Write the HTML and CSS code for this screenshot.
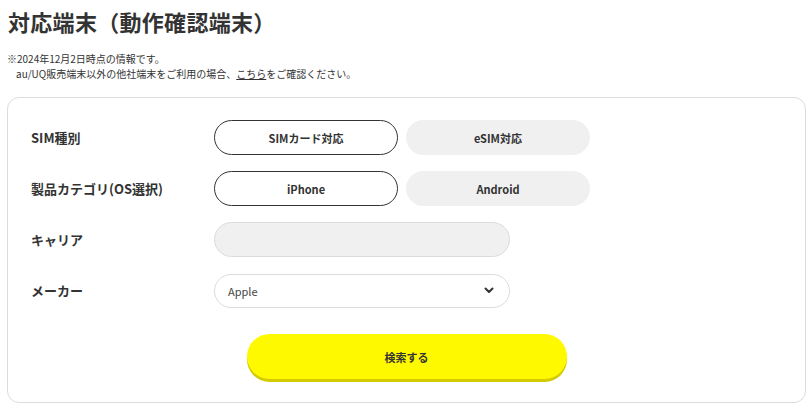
FILE: index.html
```html
<!DOCTYPE html>
<html lang="ja">
<head>
<meta charset="utf-8">
<link rel="stylesheet" href="styles.css">
</head>
<body>
<div class="page">
  <h1 class="title">対応端末（動作確認端末）</h1>
  <p class="note">※2024年12月2日時点の情報です。<br><span class="indent">au/UQ販売端末以外の他社端末をご利用の場合、<a class="link" href="#">こちら</a>をご確認ください。</span></p>
  <div class="card">
    <div class="row">
      <div class="label">SIM種別</div>
      <div class="options">
        <button class="pill pill-active">SIMカード対応</button>
        <button class="pill pill-off">eSIM対応</button>
      </div>
    </div>
    <div class="row">
      <div class="label">製品カテゴリ(OS選択)</div>
      <div class="options">
        <button class="pill pill-active">iPhone</button>
        <button class="pill pill-off">Android</button>
      </div>
    </div>
    <div class="row">
      <div class="label">キャリア</div>
      <div class="field field-disabled"></div>
    </div>
    <div class="row">
      <div class="label">メーカー</div>
      <div class="field field-select">
        <span class="select-text">Apple</span>
        <svg class="chev" width="10" height="7" viewBox="0 0 10 7"><path d="M1.5 1.5 L5 5 L8.5 1.5" fill="none" stroke="#333" stroke-width="2" stroke-linecap="round" stroke-linejoin="round"/></svg>
      </div>
    </div>
    <div class="actions">
      <button class="search">検索する</button>
    </div>
  </div>
</div>
</body>
</html>
```
FILE: styles.css
```css
* { box-sizing: border-box; }
html, body { margin: 0; padding: 0; background: #fff; }
body {
  font-family: "Noto Sans CJK JP", "Noto Sans", sans-serif;
  color: #333;
}
.page { padding: 0 6px 0 7px; }
.title {
  margin: 0;
  padding: 7px 0 0 1px;
  font-size: 22px;
  line-height: 28px;
  font-weight: 700;
  color: #333;
  letter-spacing: 0.3px;
}
.note {
  margin: 16px 0 0 0;
  font-size: 10px;
  line-height: 15px;
  color: #333;
}
.indent { padding-left: 9px; }
.link { color: #333; text-decoration: underline; }
.card {
  margin-top: 16px;
  border: 1px solid #dcdcdc;
  border-radius: 12px;
  padding: 22px 23px 23px 23px;
  display: flex;
  flex-direction: column;
  gap: 16px;
}
.row {
  display: flex;
  align-items: center;
  height: 35px;
}
.label {
  width: 183px;
  font-size: 13px;
  font-weight: 700;
  color: #333;
  flex-shrink: 0;
}
.options { display: flex; gap: 8px; }
.pill {
  width: 184px;
  height: 35px;
  border-radius: 18px;
  font-family: inherit;
  font-size: 11px;
  font-weight: 700;
  color: #333;
  padding: 0;
  cursor: pointer;
}
.pill-active { background: #fff; border: 1px solid #333; }
.pill-off { background: #f0f0f0; border: 1px solid #f0f0f0; }
.field {
  width: 296px;
  height: 35px;
  border-radius: 18px;
  border: 1px solid #dcdcdc;
}
.field-disabled { background: #f0f0f0; }
.field-select {
  height: 34px;
  background: #fff;
  display: flex;
  align-items: center;
  justify-content: space-between;
  padding: 0 15px 0 13px;
}
.select-text { font-size: 11px; color: #444; }
.chev { display: block; }
.actions {
  display: flex;
  justify-content: center;
  padding-top: 10px;
}
.search {
  width: 320px;
  height: 45px;
  border: none;
  border-radius: 23px;
  background: #fff900;
  box-shadow: 0 3px 0 #d3cb00;
  font-family: inherit;
  font-size: 11px;
  font-weight: 700;
  color: #333;
  cursor: pointer;
}
```
